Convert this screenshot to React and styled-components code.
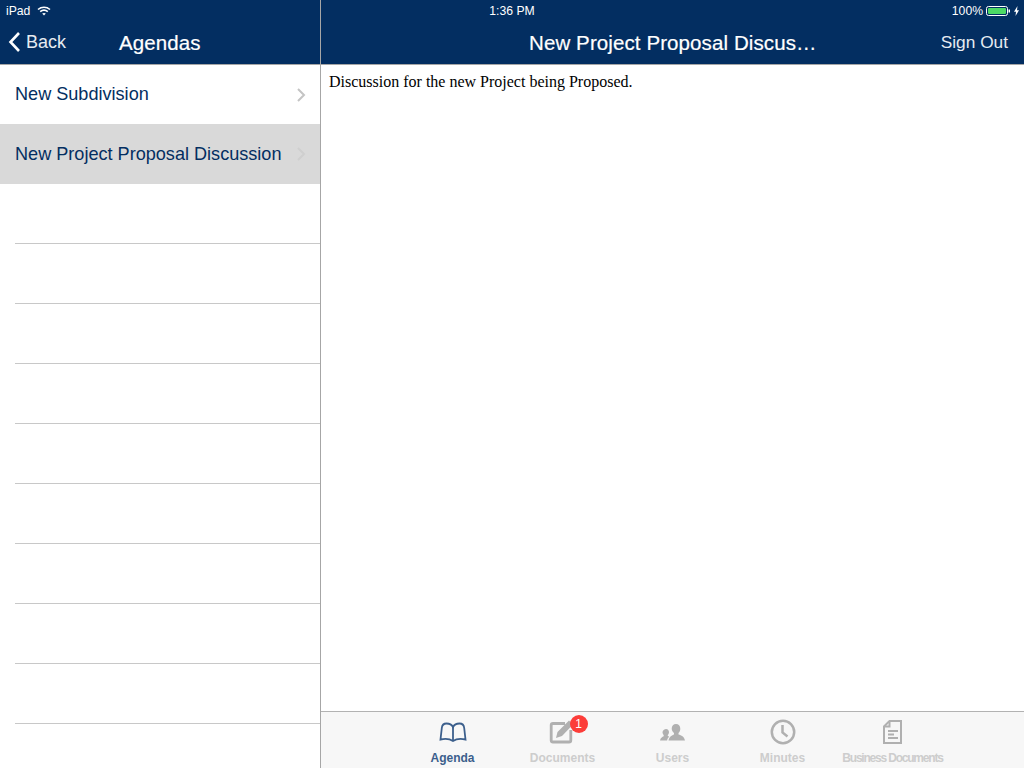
import React from 'react';
import styled, { createGlobalStyle } from 'styled-components';

const NAVY = '#032e61';
const ICON_GREY = '#b0b0b0';

const GlobalStyle = createGlobalStyle`
    html, body {
        margin: 0;
        padding: 0;
        background: #fff;
    }
`;

const Shell = styled.div`
    position: relative;
    display: flex;
    width: 1024px;
    height: 768px;
    overflow: hidden;
    font-family: 'Liberation Sans', Arial, sans-serif;
`;

const StatusBar = styled.div`
    position: absolute;
    top: 1px;
    left: 0;
    right: 0;
    height: 20px;
    display: grid;
    grid-template-columns: 1fr auto 1fr;
    align-items: center;
    padding: 0 6px 0 6px;
    color: #fff;
    font-size: 12.2px;
`;

const StatusLeft = styled.div`
    display: flex;
    align-items: center;
    gap: 7px;
`;

const StatusRight = styled.div`
    display: flex;
    align-items: center;
    justify-content: flex-end;
    gap: 3px;
    margin-right: -1px;
`;

const Sidebar = styled.aside`
    width: 320px;
    flex: none;
    display: flex;
    flex-direction: column;
    border-right: 1px solid #a6a6a6;
`;

const Main = styled.main`
    flex: 1;
    min-width: 0;
    display: flex;
    flex-direction: column;
`;

const NavBar = styled.header`
    height: 65px;
    flex: none;
    box-sizing: border-box;
    padding-top: 22px;
    background: ${NAVY};
    border-bottom: 1px solid #a6a6a6;
    display: flex;
    align-items: center;
    color: #fff;
    font-size: 18px;
`;

const BackButton = styled.div`
    display: flex;
    align-items: center;
    gap: 5px;
    width: 119px;
    padding-left: 8px;
    margin-bottom: 2px;
    box-sizing: border-box;
    color: #e6ebf1;
`;

const NavTitle = styled.div`
    font-size: 20.5px;
    font-weight: 500;
    letter-spacing: 0.1px;
    -webkit-text-stroke: 0.2px #fff;
`;

const MainNav = styled(NavBar)`
    justify-content: space-between;
    padding-right: 16px;
    padding-left: 208px;
`;

const SignOut = styled.div`
    color: #e6ebf1;
    font-size: 17.3px;
    margin-bottom: 2px;
`;

const List = styled.div`
    flex: 1;
    display: flex;
    flex-direction: column;
`;

const Row = styled.div`
    height: ${p => (p.$first ? 59 : 60)}px;
    flex: none;
    box-sizing: border-box;
    margin-left: ${p => (p.$flush ? 0 : 15)}px;
    padding: 0 14px 0 ${p => (p.$flush ? 15 : 0)}px;
    display: flex;
    align-items: center;
    justify-content: space-between;
    background: ${p => (p.$selected ? '#d9d9d9' : 'transparent')};
    border-bottom: ${p => (p.$flush ? 'none' : '1px solid #c8c8c8')};
    color: ${NAVY};
    font-size: 18.1px;
`;

const Chevron = styled.svg`
    width: 10px;
    height: 16px;
    fill: none;
    stroke: ${p => (p.$selected ? '#cfcfcf' : '#c4c4c4')};
    stroke-width: 2;
`;

const Content = styled.div`
    flex: 1;
    padding: 8px;
    font-family: 'Liberation Serif', 'Times New Roman', serif;
    font-size: 16px;
    line-height: 18px;
    color: #000;
`;

const TabBar = styled.nav`
    height: 57px;
    flex: none;
    box-sizing: border-box;
    background: #f7f7f7;
    border-top: 1px solid #b2b2b2;
    display: flex;
    justify-content: center;
`;

const Tab = styled.div`
    position: relative;
    width: 110px;
    display: flex;
    flex-direction: column;
    align-items: center;
    color: ${p => (p.$active ? '#3c5f8c' : '#cdcdcd')};
`;

const TabIcon = styled.svg`
    width: 30px;
    height: 30px;
    margin-top: 5px;
    fill: none;
    stroke: ${p => (p.$active ? '#3c5f8c' : ICON_GREY)};
`;

const TabLabel = styled.span`
    margin-top: 4px;
    font-size: 12px;
    font-weight: 700;
    line-height: 14px;
    white-space: nowrap;
    letter-spacing: ${p => (p.$tight ? '-1.2px' : '0')};
`;

const Badge = styled.span`
    position: absolute;
    top: 3px;
    left: 62px;
    width: 18px;
    height: 18px;
    border-radius: 50%;
    background: #fc3d39;
    color: #fff;
    font-size: 12px;
    line-height: 18px;
    text-align: center;
`;

const rows = ['New Subdivision', 'New Project Proposal Discussion'];

function ChevronRight({ selected }) {
    return (
        <Chevron viewBox="0 0 10 16" $selected={selected}>
            <path d="M2 2l6 6-6 6" />
        </Chevron>
    );
}

export default function App() {
    return (
        <Shell>
            <GlobalStyle />
            <Sidebar>
                <NavBar>
                    <BackButton>
                        <svg width="13" height="22" viewBox="0 0 13 22" fill="none" stroke="#fff" strokeWidth="2.6">
                            <path d="M11 2L2.5 11l8.5 9" />
                        </svg>
                        Back
                    </BackButton>
                    <NavTitle>Agendas</NavTitle>
                </NavBar>
                <List>
                    <Row $flush $first>
                        {rows[0]}
                        <ChevronRight />
                    </Row>
                    <Row $selected $flush>
                        {rows[1]}
                        <ChevronRight selected />
                    </Row>
                    {Array.from({ length: 10 }, (_, i) => <Row key={i} />)}
                </List>
            </Sidebar>
            <Main>
                <MainNav>
                    <NavTitle>New Project Proposal Discus…</NavTitle>
                    <SignOut>Sign Out</SignOut>
                </MainNav>
                <Content>Discussion for the new Project being Proposed.</Content>
                <TabBar>
                    <Tab $active>
                        <TabIcon viewBox="0 0 30 30" $active strokeWidth="1.8">
                            <path d="M15 10C13.500 7 11 6.500 8.500 6.500 5 6.500 4 9 3.800 11L2.500 22.500c4.500-1 9.500-.5 12.500 1.500 3-2 8-2.500 12.500-1.500L26.200 11C26 9 25 6.500 21.500 6.500 19 6.500 16.500 7 15 10z" />
                            <path d="M15 10v14" />
                        </TabIcon>
                        <TabLabel>Agenda</TabLabel>
                    </Tab>
                    <Tab>
                        <TabIcon viewBox="0 0 30 30">
                            <path d="M17 6.500H5A1.800 1.800 0 0 0 3.200 8.300v15A1.800 1.800 0 0 0 5 25h16a1.800 1.800 0 0 0 1.800-1.800V13" strokeWidth="2.800" />
                            <path d="M8 21l1.500-6L21 3.500l4 4L14 19z" fill={ICON_GREY} stroke="none" />
                        </TabIcon>
                        <TabLabel>Documents</TabLabel>
                        <Badge>1</Badge>
                    </Tab>
                    <Tab>
                        <TabIcon viewBox="0 0 30 30">
                            <path d="M18 7c2.500 0 4.300 2 4.300 4.800 0 1.900-.8 3.400-1.800 4.300v1.400c2.800.8 5.700 2 6.500 6H10.500c.7-4 3.700-5.200 5.500-6v-1.400c-1-.9-2.300-2.400-2.300-4.300C13.700 9 15.500 7 18 7z" fill={ICON_GREY} stroke="none" />
                            <path d="M8.200 12c1.700 0 2.800 1.400 2.800 3.200 0 1.200-.6 2.200-1.200 2.800v1.100c.5.200 1 .4 1.400.7-1 .8-1.800 2-2.100 3.700H2c.4-2.700 2.300-3.600 3.700-4.300V18c-.6-.6-1.200-1.600-1.200-2.800C4.500 13.400 6.500 12 8.200 12z" fill={ICON_GREY} stroke="none" />
                        </TabIcon>
                        <TabLabel>Users</TabLabel>
                    </Tab>
                    <Tab>
                        <TabIcon viewBox="0 0 30 30" strokeWidth="2.500">
                            <circle cx="15" cy="15" r="11.200" />
                            <path d="M14.500 8v7.500l5 4" />
                        </TabIcon>
                        <TabLabel>Minutes</TabLabel>
                    </Tab>
                    <Tab>
                        <TabIcon viewBox="0 0 30 30" strokeWidth="2">
                            <path d="M11.500 4H23v22H6V9.500z" />
                            <path d="M11.500 4v5.500H6" />
                            <path d="M10 14h10M10 17.500h6M10 21h10" />
                        </TabIcon>
                        <TabLabel $tight>Business Documents</TabLabel>
                    </Tab>
                </TabBar>
            </Main>
            <StatusBar>
                <StatusLeft>
                    iPad
                    <svg width="14" height="10" viewBox="0 0 14 10" fill="none" stroke="#fff" strokeWidth="1.600">
                        <path d="M1 3.500c3.500-3 8.500-3 12 0M3.200 5.700c2.200-1.800 5.400-1.800 7.600 0" />
                        <path d="M5.200 7.600c1-.7 2.600-.7 3.600 0L7 9.500z" fill="#fff" stroke="none" />
                    </svg>
                </StatusLeft>
                <span>1:36 PM</span>
                <StatusRight>
                    100%
                    <svg width="25" height="10" viewBox="0 0 25 10">
                        <rect x="0.500" y="0.500" width="21" height="9" rx="2" fill="none" stroke="#fff" />
                        <rect x="2" y="2" width="18" height="6" rx="1" fill="#4cd964" />
                        <rect x="22.500" y="3.500" width="1.500" height="3" fill="#fff" />
                    </svg>
                    <svg width="5" height="10" viewBox="0 0 5 10">
                        <path d="M3.500 0L0 5.700h2L1.500 10 5 4.300H3z" fill="#fff" />
                    </svg>
                </StatusRight>
            </StatusBar>
        </Shell>
    );
}
